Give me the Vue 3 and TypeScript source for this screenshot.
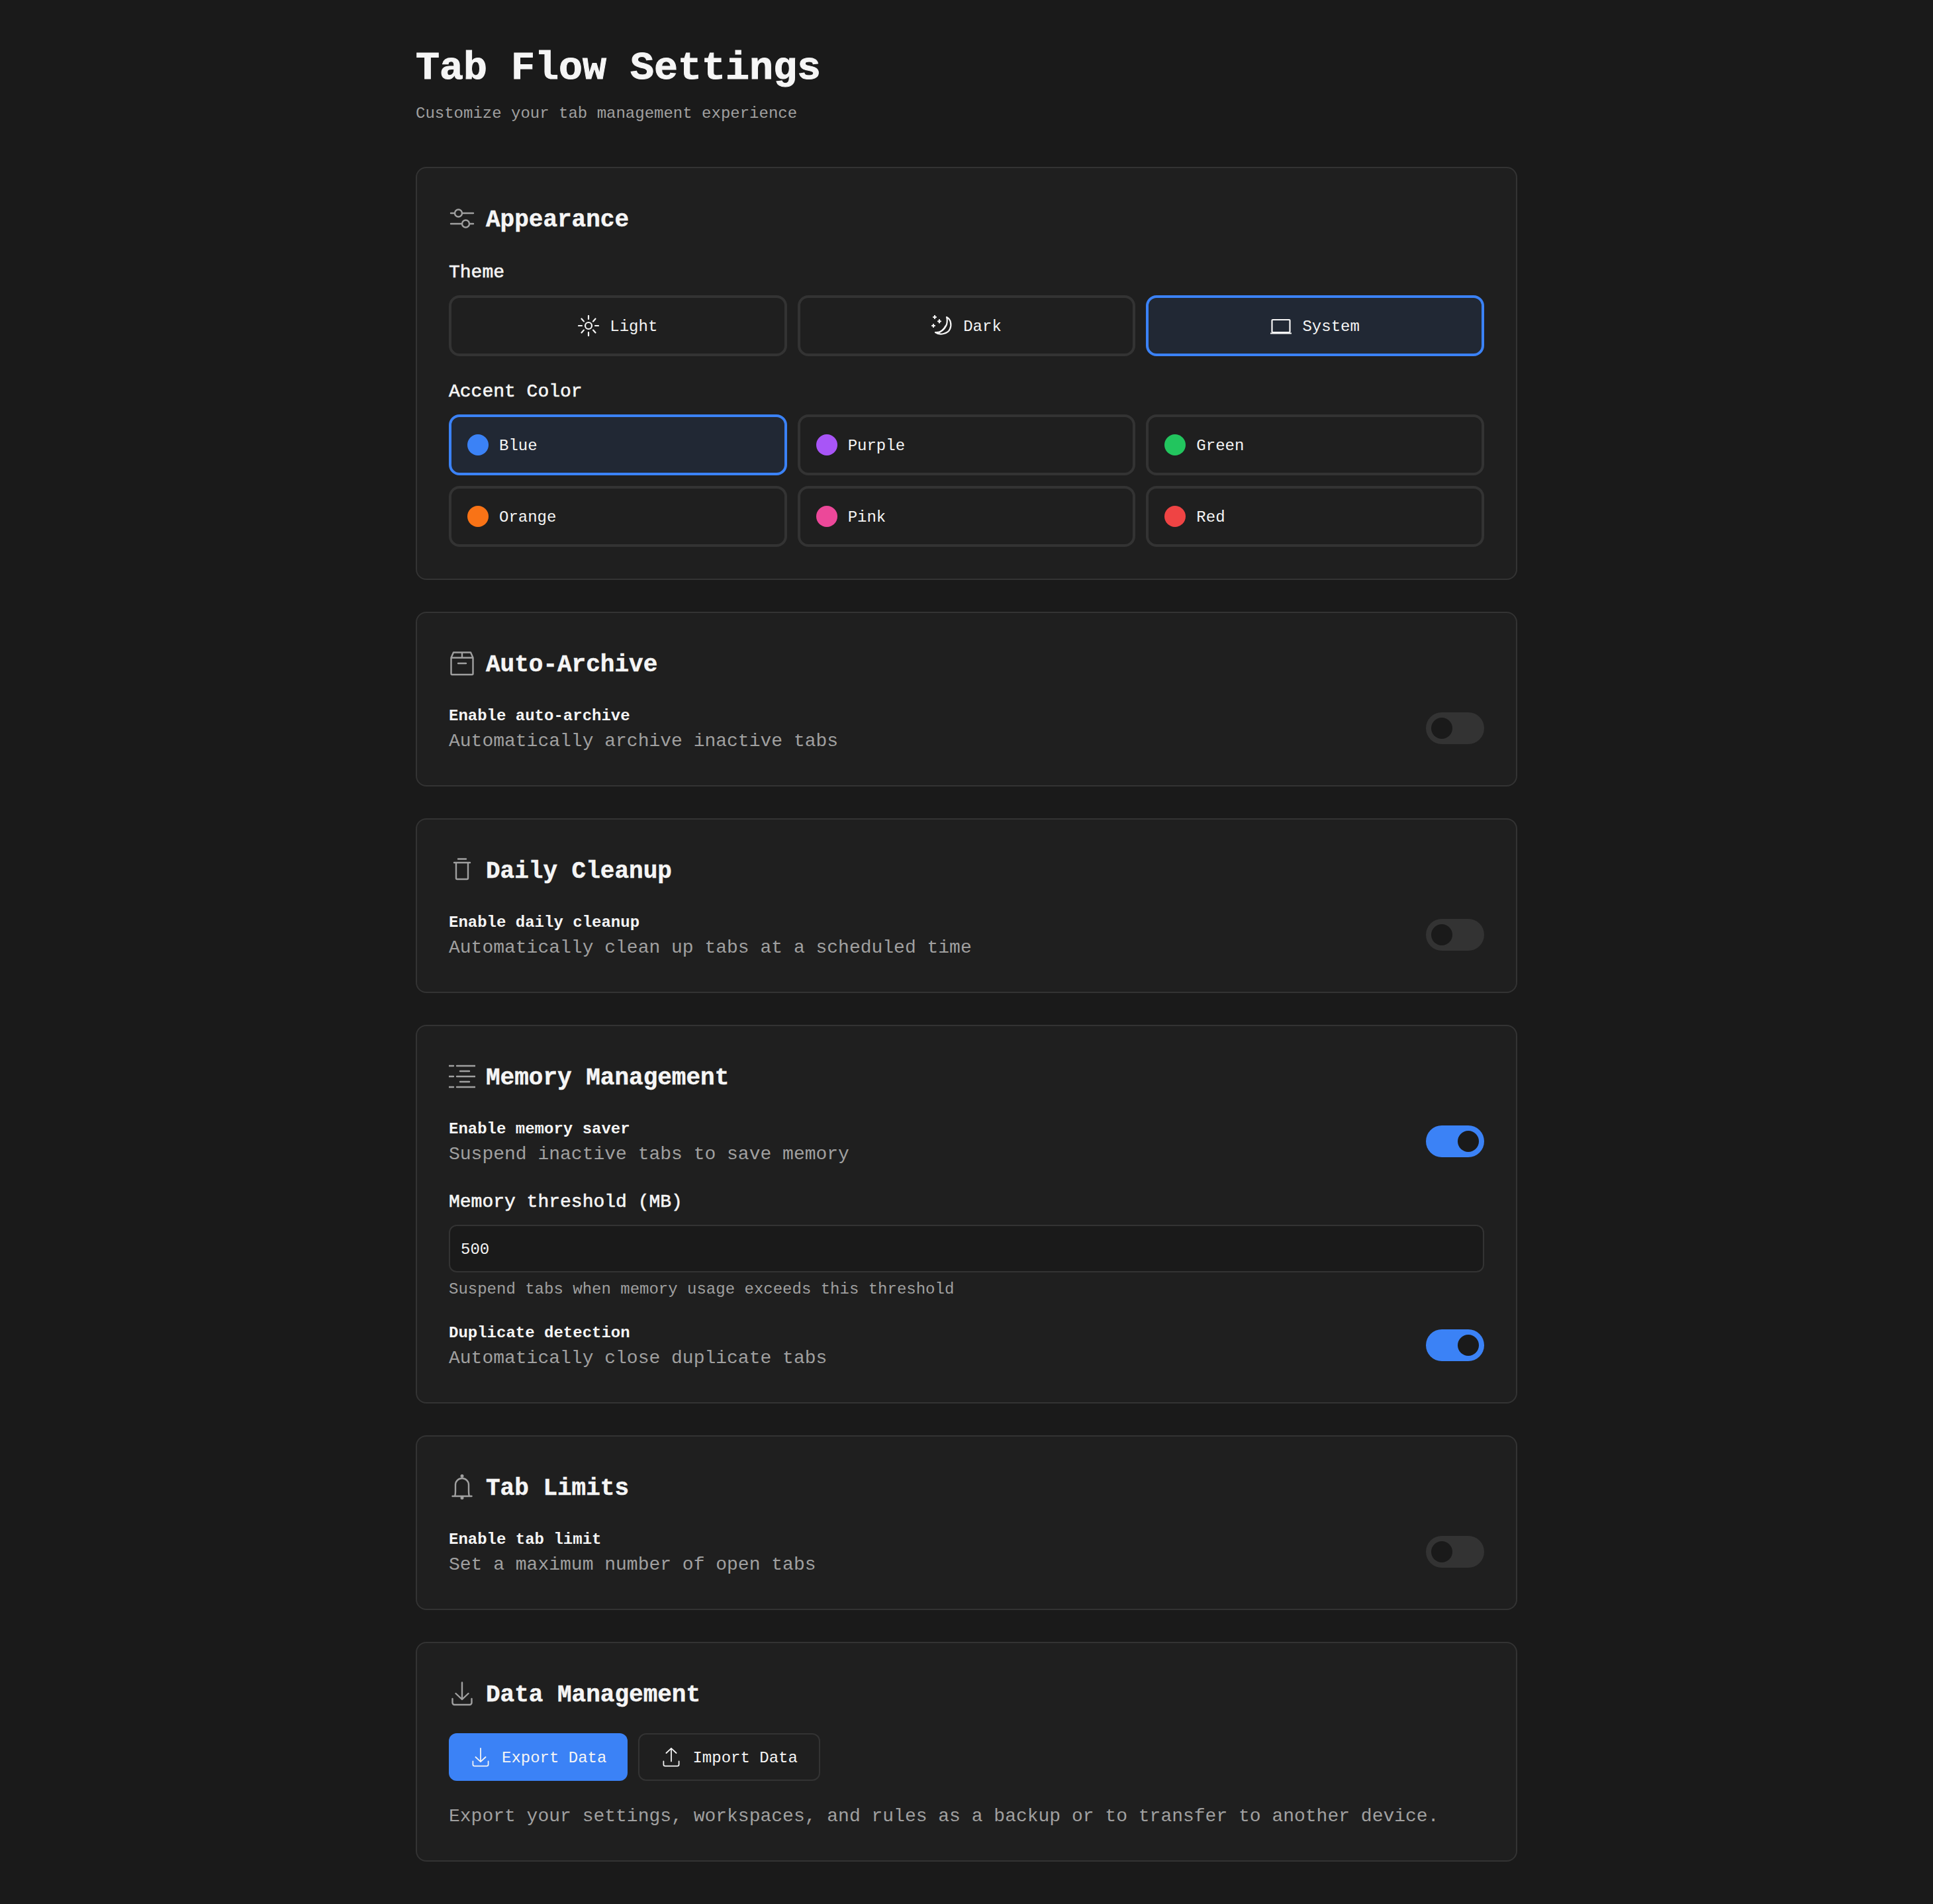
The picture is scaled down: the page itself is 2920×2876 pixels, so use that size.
<script setup lang="ts">
import { ref } from 'vue'

const accents = [
  { name: 'Blue', color: '#3b82f6' },
  { name: 'Purple', color: '#a855f7' },
  { name: 'Green', color: '#22c55e' },
  { name: 'Orange', color: '#f97316' },
  { name: 'Pink', color: '#ec4899' },
  { name: 'Red', color: '#ef4444' },
]

const theme = ref('System')
const accent = ref('Blue')
const autoArchive = ref(false)
const dailyCleanup = ref(false)
const memorySaver = ref(true)
const duplicates = ref(true)
const tabLimit = ref(false)
</script>

<template>
  <main class="page">
    <header class="page-header">
      <h1>Tab Flow Settings</h1>
      <p>Customize your tab management experience</p>
    </header>

    <section class="card">
      <h2>
        <svg class="head-icon" viewBox="0 0 40 40">
          <path d="M3 12h6M20 12h17M3 28h17M31 28h6" />
          <circle cx="14.5" cy="12" r="5.500" />
          <circle cx="25.5" cy="28" r="5.500" />
        </svg>
        <span>Appearance</span>
      </h2>
      <div class="field-label">Theme</div>
      <div class="grid">
        <button class="choice center" :class="{ active: theme === 'Light' }" @click="theme = 'Light'">
          <svg class="btn-icon" viewBox="0 0 32 32">
            <circle cx="16" cy="16" r="5" />
            <path d="M16 1v5M16 26v5M1 16h5M26 16h5M5.5 5.5l3.4 3.9M23 22.6l3.5 3.9M5.5 26.5l3.4-3.9M23 9.4l3.5-3.9" />
          </svg>
          <span class="label">Light</span>
        </button>
        <button class="choice center" :class="{ active: theme === 'Dark' }" @click="theme = 'Dark'">
          <svg class="btn-icon" viewBox="0 0 32 32">
            <path d="M23 3c6 3 8 11 5 18s-15 10-22 5c7 1 14-4 17-12 1-4 1-8 0-11Z" />
            <path d="M21 17c-2 4-5 7-9 9" />
            <path d="M5 1v4M3 3h4M12 7v4.500M10 9.300h4M3 14v4M1 16h4" />
          </svg>
          <span class="label">Dark</span>
        </button>
        <button class="choice center" :class="{ active: theme === 'System' }" @click="theme = 'System'">
          <svg class="btn-icon" viewBox="0 0 32 32">
            <rect x="2.500" y="7" width="27" height="19" rx="1" />
            <path d="M.5 27.500h31" />
          </svg>
          <span class="label">System</span>
        </button>
      </div>

      <div class="field-label spaced">Accent Color</div>
      <div class="grid">
        <button
          v-for="item in accents"
          :key="item.name"
          class="choice"
          :class="{ active: accent === item.name }"
          @click="accent = item.name"
        >
          <span class="swatch" :style="{ background: item.color }"></span>
          <span class="label">{{ item.name }}</span>
        </button>
      </div>
    </section>

    <section class="card">
      <h2>
        <svg class="head-icon" viewBox="0 0 40 40">
          <path d="M3.500 11.500 7 3.500h26l3.500 8v24a1.500 1.500 0 0 1-1.500 1.500H5a1.500 1.500 0 0 1-1.500-1.500ZM3.500 11.500h33M20 3.500v8M14 20h12" />
        </svg>
        <span>Auto-Archive</span>
      </h2>
      <div class="row">
        <div>
          <div class="row-title">Enable auto-archive</div>
          <div class="row-desc">Automatically archive inactive tabs</div>
        </div>
        <button class="toggle" :class="{ on: autoArchive }" @click="autoArchive = !autoArchive"><span></span></button>
      </div>
    </section>

    <section class="card">
      <h2>
        <svg class="head-icon" viewBox="0 0 40 40">
          <path d="M14 3.500h12M8 9h24M11 9v23.500a1.500 1.500 0 0 0 1.500 1.500h15a1.500 1.500 0 0 0 1.500-1.500V9" />
        </svg>
        <span>Daily Cleanup</span>
      </h2>
      <div class="row">
        <div>
          <div class="row-title">Enable daily cleanup</div>
          <div class="row-desc">Automatically clean up tabs at a scheduled time</div>
        </div>
        <button class="toggle" :class="{ on: dailyCleanup }" @click="dailyCleanup = !dailyCleanup"><span></span></button>
      </div>
    </section>

    <section class="card">
      <h2>
        <svg class="head-icon" viewBox="0 0 40 40">
          <path d="M0 4h7M12 4h28M17 12h14M0 20h7M12 20h28M17 28h14M0 36h7M12 36h28" />
        </svg>
        <span>Memory Management</span>
      </h2>
      <div class="row">
        <div>
          <div class="row-title">Enable memory saver</div>
          <div class="row-desc">Suspend inactive tabs to save memory</div>
        </div>
        <button class="toggle" :class="{ on: memorySaver }" @click="memorySaver = !memorySaver"><span></span></button>
      </div>
      <label class="field-label spaced" for="threshold">Memory threshold (MB)</label>
      <input id="threshold" class="text-input" type="text" value="500" />
      <p class="help">Suspend tabs when memory usage exceeds this threshold</p>
      <div class="row">
        <div>
          <div class="row-title">Duplicate detection</div>
          <div class="row-desc">Automatically close duplicate tabs</div>
        </div>
        <button class="toggle" :class="{ on: duplicates }" @click="duplicates = !duplicates"><span></span></button>
      </div>
    </section>

    <section class="card">
      <h2>
        <svg class="head-icon" viewBox="0 0 40 40">
          <path d="M5.500 34h29M9 34c1-2 1-5 1-9v-8a10 10 0 0 1 20 0v8c0 4 0 7 1 9" />
          <circle cx="20" cy="3.500" r="2.500" class="solid" />
          <circle cx="20" cy="36.500" r="2.500" class="solid" />
        </svg>
        <span>Tab Limits</span>
      </h2>
      <div class="row">
        <div>
          <div class="row-title">Enable tab limit</div>
          <div class="row-desc">Set a maximum number of open tabs</div>
        </div>
        <button class="toggle" :class="{ on: tabLimit }" @click="tabLimit = !tabLimit"><span></span></button>
      </div>
    </section>

    <section class="card">
      <h2>
        <svg class="head-icon" viewBox="0 0 40 40">
          <path d="M20 3.500v25M10.500 20l9.500 9 9.500-9M5.500 28v6a3 3 0 0 0 3 3h23a3 3 0 0 0 3-3v-6" />
        </svg>
        <span>Data Management</span>
      </h2>
      <div class="actions">
        <button class="action primary">
          <svg class="btn-icon" viewBox="0 0 40 40">
            <path d="M20 3.500v25M10.500 20l9.500 9 9.500-9M5.500 28v6a3 3 0 0 0 3 3h23a3 3 0 0 0 3-3v-6" />
          </svg>
          <span class="label">Export Data</span>
        </button>
        <button class="action">
          <svg class="btn-icon" viewBox="0 0 40 40">
            <path d="M20 28V3.500M10.500 12.500 20 3.500l9.500 9M5.500 28v6a3 3 0 0 0 3 3h23a3 3 0 0 0 3-3v-6" />
          </svg>
          <span class="label">Import Data</span>
        </button>
      </div>
      <p class="row-desc note">Export your settings, workspaces, and rules as a backup or to transfer to another device.</p>
    </section>
  </main>
</template>

<style>
html,
body {
  background: #1a1a1a;
}
</style>

<style scoped>
.page {
  box-sizing: border-box;
  width: 1664px;
  margin: 0 auto;
  padding: 64px 0;
  font-family: "Liberation Mono", "DejaVu Sans Mono", monospace;
  color: #f5f5f5;
}

.page-header {
  margin-bottom: 64px;
}

h1 {
  margin: 0 0 16px;
  padding-top: 7px;
  font-size: 60px;
  line-height: 65px;
  font-weight: 700;
  -webkit-text-stroke: 1px #f5f5f5;
}

.page-header p {
  margin: 0;
  padding-top: 4px;
  font-size: 24px;
  line-height: 32px;
  color: #a0a0a0;
}

.card {
  box-sizing: border-box;
  margin-bottom: 48px;
  padding: 48px;
  background: #1f1f1f;
  border: 2px solid #333;
  border-radius: 16px;
}

.card:last-child {
  margin-bottom: 0;
}

h2 {
  display: flex;
  align-items: center;
  gap: 16px;
  height: 56px;
  margin: 0 0 32px;
  font-size: 36px;
  font-weight: 700;
  -webkit-text-stroke: 0.5px #f5f5f5;
}

h2 span {
  padding-top: 6px;
  line-height: 50px;
}

svg {
  flex: none;
  fill: none;
  stroke: currentColor;
  stroke-linecap: round;
  stroke-linejoin: round;
}

.head-icon {
  width: 40px;
  height: 40px;
  color: #a0a0a0;
  stroke-width: 2.4;
  -webkit-text-stroke: 0;
}

.btn-icon {
  width: 32px;
  height: 32px;
  stroke-width: 2.2;
}

.solid {
  fill: currentColor;
  stroke: none;
}

.field-label {
  display: block;
  margin-bottom: 16px;
  padding-top: 4px;
  font-size: 28px;
  line-height: 36px;
  font-weight: 400;
  -webkit-text-stroke: 0.6px #f5f5f5;
}

.spaced {
  margin-top: 32px;
}

.grid {
  display: grid;
  grid-template-columns: repeat(3, 1fr);
  gap: 16px;
}

.choice {
  box-sizing: border-box;
  display: flex;
  align-items: center;
  gap: 16px;
  height: 92px;
  padding: 0 24px;
  background: transparent;
  border: 4px solid #333;
  border-radius: 16px;
  font: inherit;
  font-size: 24px;
  color: #f5f5f5;
  cursor: pointer;
}

.label {
  padding-top: 3px;
}

.choice.center {
  justify-content: center;
}

.choice.active {
  background: rgba(59, 130, 246, 0.1);
  border-color: #3b82f6;
}

.swatch {
  width: 32px;
  height: 32px;
  border-radius: 50%;
}

.row {
  display: flex;
  align-items: center;
  justify-content: space-between;
}

.row-title {
  padding-top: 3px;
  font-size: 24px;
  line-height: 33px;
  font-weight: 700;
}

.row-desc {
  margin: 0;
  padding-top: 3px;
  font-size: 28px;
  line-height: 37px;
  color: #a0a0a0;
}

.toggle {
  position: relative;
  width: 88px;
  height: 48px;
  padding: 0;
  background: #333;
  border: 0;
  border-radius: 24px;
  cursor: pointer;
}

.toggle span {
  position: absolute;
  top: 8px;
  left: 8px;
  width: 32px;
  height: 32px;
  background: #1a1a1a;
  border-radius: 50%;
}

.toggle.on {
  background: #3b82f6;
}

.toggle.on span {
  left: 48px;
}

.text-input {
  box-sizing: border-box;
  display: block;
  width: 100%;
  height: 72px;
  padding: 3px 16px 0;
  background: #1a1a1a;
  border: 2px solid #333;
  border-radius: 12px;
  outline: none;
  font: inherit;
  font-size: 24px;
  color: #f5f5f5;
}

.help {
  margin: 8px 0 32px;
  padding-top: 3px;
  font-size: 24px;
  line-height: 29px;
  color: #a0a0a0;
}

.actions {
  display: flex;
  gap: 16px;
}

.action {
  display: flex;
  align-items: center;
  gap: 16px;
  height: 72px;
  padding: 0 32px;
  background: transparent;
  border: 2px solid #333;
  border-radius: 12px;
  font: inherit;
  font-size: 24px;
  color: #f5f5f5;
  cursor: pointer;
}

.action.primary {
  background: #3b82f6;
  border: 0;
}

.note {
  margin-top: 32px;
}
</style>
